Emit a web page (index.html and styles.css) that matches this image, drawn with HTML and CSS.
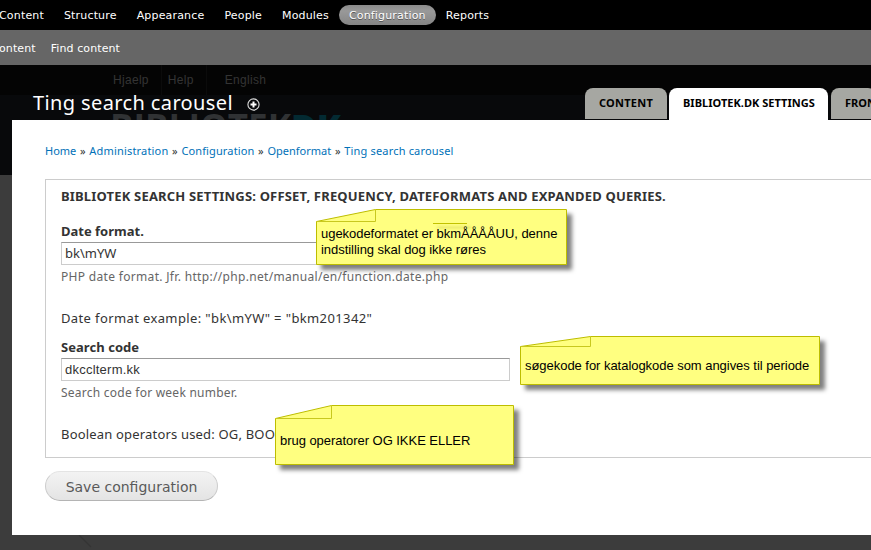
FILE: index.html
```
<!DOCTYPE html>
<html lang="da">
<head>
<meta charset="utf-8">
<title>Ting search carousel</title>
<link rel="stylesheet" href="styles.css">
</head>
<body>
<div class="screen">
  <nav class="toolbar">
    <a>Content</a><a>Structure</a><a>Appearance</a><a>People</a><a>Modules</a><a class="current">Configuration</a><a>Reports</a>
  </nav>
  <nav class="shortcuts"><a>ontent</a><a>Find content</a></nav>

  <div class="stage">
    <div class="backdrop">
      <div class="site-links"><a>Hjaelp</a><a>Help</a><a>English</a></div>
      <div class="site-brand"><span class="brand-text">BIBLIOTEK<b>DK</b></span></div>
      <svg class="streak" width="20" height="15" viewBox="0 0 20 15"><path d="M4 0L16 12" stroke="#343434" stroke-width="1.4"/></svg>
    </div>

    <div class="overlay">
      <header class="overlay-head">
        <h1>Ting search carousel</h1>
        <svg class="add" width="13" height="13" viewBox="0 0 13 13"><circle cx="6.5" cy="6.5" r="5.6" fill="#08090b" stroke="#ddd" stroke-width="1.1"/><path d="M6.5 3.5v6M3.5 6.5h6" stroke="#fff" stroke-width="2"/></svg>
        <ul class="tabs">
          <li class="tab-content">Content</li>
          <li class="tab-settings active">Bibliotek.dk settings</li>
          <li class="tab-front">Fron</li>
        </ul>
      </header>
      <main class="panel">
        <div class="breadcrumb"><a>Home</a><i>»</i><a class="w2">Administration</a><i>»</i><a class="w3">Configuration</a><i>»</i><a>Openformat</a><i>»</i><a class="w2">Ting search carousel</a></div>
        <form>
          <section class="fieldset">
            <h2>BIBLIOTEK SEARCH SETTINGS: OFFSET, FREQUENCY, DATEFORMATS AND EXPANDED QUERIES.</h2>
            <label>Date format.</label>
            <div class="input">bk\mYW</div>
            <p class="description">PHP date format. Jfr. http://php.net/manual/en/function.date.php</p>
            <p class="example">Date format example: "bk\mYW" = "bkm201342"</p>
            <label class="code-label">Search code</label>
            <div class="input code">dkcclterm.kk</div>
            <p class="description short">Search code for week number.</p>
            <p class="operators">Boolean operators used: OG, BOOL</p>
          </section>
          <button type="button">Save configuration</button>
        </form>
      </main>
    </div>
  </div>

  <aside class="note note-date">
    <svg width="251" height="56" viewBox="0 0 251 56"><path class="sheet" d="M.5 12.5L59.5.5H250.5V55.5H.5Z"/><path class="fold" d="M.5 12.5H59.5V.5"/></svg>
    <p>ugekodeformatet er <span class="mark">bkm</span>ÅÅÅÅUU, denne<br>indstilling skal dog ikke røres</p>
  </aside>
  <aside class="note note-code">
    <svg width="300" height="49" viewBox="0 0 300 49"><path class="sheet" d="M.5 10.5L70.5.5H299.5V48.5H.5Z"/><path class="fold" d="M.5 10.5H70.5V.5"/></svg>
    <p>søgekode for katalogkode som angives til periode</p>
  </aside>
  <aside class="note note-operators">
    <svg width="239" height="60" viewBox="0 0 239 60"><path class="sheet" d="M.5 13.5L56.5.5H238.5V59.5H.5Z"/><path class="fold" d="M.5 13.5H56.5V.5"/></svg>
    <p>brug operatorer OG IKKE ELLER</p>
  </aside>
</div>
</body>
</html>
```
FILE: styles.css
```
* { box-sizing: border-box; }
body { margin: 0; overflow: hidden; }
h1, h2, p, ul { margin: 0; padding: 0; font-weight: normal; }
.screen {
  position: relative;
  width: 871px;
  height: 550px;
  overflow: hidden;
  background: #3c3c3c;
  font-family: "Noto Sans", sans-serif;
  color: #333;
  white-space: nowrap;
}
.toolbar, .shortcuts {
  display: flex;
  align-items: center;
  font: 11px/20px "DejaVu Sans", sans-serif;
  letter-spacing: 0.17px;
  color: #fff;
}
.toolbar { height: 30px; background: #000; }
.toolbar a { margin-right: 20px; padding-top: 2px; }
.toolbar a:first-child { margin-left: -1px; }
.toolbar .current {
  margin: 0 10px 0 -10px;
  padding: 1px 10px 0;
  height: 20px;
  border-radius: 10px;
  background: linear-gradient(#8a8a8a, #999 30%, #858585);
  text-shadow: 0 1px 0 #555;
}
.shortcuts { height: 35px; padding-top: 2px; gap: 15px; background: #666; letter-spacing: 0.1px; }
.shortcuts a:first-child { margin-left: -1px; }

.stage { position: relative; height: 485px; }
.backdrop { position: absolute; inset: 0; }
.site-links {
  display: flex;
  height: 30px;
  padding-left: 113px;
  background: #040404;
  font: 12px/30px "Liberation Sans", sans-serif;
  letter-spacing: 0.3px;
  color: #343434;
}
.site-links a { border-right: 1px solid #0b0b0b; padding-right: 12px; margin-right: 6px; }
.site-links a:nth-child(3) { margin-left: 12px; border: 0; }
.site-brand { height: 80px; padding: 12px 0 0 110px; background: #08090b; overflow: hidden; }
.brand-text { font: bold 35px/40px "Open Sans", sans-serif; color: #303234; }
.brand-text b { color: #032a32; }
.streak { position: absolute; left: 75px; top: 470px; }

.overlay { position: absolute; inset: 0; }
.overlay-head { display: flex; height: 55px; padding-left: 33px; }
h1 { margin-top: 24px; font-size: 20px; line-height: 28px; letter-spacing: 0.38px; color: #fff; }
.add { margin: 33px 0 0 14px; }
.tabs { position: absolute; left: 585px; top: 23px; display: flex; gap: 2px; list-style: none; }
.tabs li {
  height: 31px;
  padding: 0 14px;
  border-radius: 8px 8px 0 0;
  background: #a6a7a2;
  font-size: 11px;
  line-height: 30px;
  font-weight: bold;
  text-transform: uppercase;
  color: #000;
}
.tabs .tab-content { width: 82px; letter-spacing: 0.24px; }
.tabs .active { width: 159px; height: 32px; background: #fff; letter-spacing: 0.03px; }
.tabs .tab-front { margin-left: 1px; padding-right: 0; }

.panel { margin-left: 12px; width: 900px; height: 415px; padding: 22px 0 0 33px; background: #fff; }
.breadcrumb { display: flex; height: 18px; font-size: 11px; line-height: 18px; color: #0071b8; }
.breadcrumb i { width: 13px; text-align: center; font-style: normal; color: #333; }
.breadcrumb .w2 { letter-spacing: 0.18px; }
.breadcrumb .w3 { letter-spacing: 0.13px; }
.fieldset {
  display: flow-root;
  height: 279px;
  margin-top: 19px;
  padding: 6px 0 0 15px;
  border: 1px solid #ccc;
}
h2, label { display: block; font-size: 13px; line-height: 20px; font-weight: bold; }
h2 { letter-spacing: 0.175px; margin-bottom: 15px; }
.input {
  width: 449px;
  height: 23px;
  padding-left: 3px;
  border: 1px solid #ccc;
  border-top-color: #999;
  font-size: 13px;
  line-height: 21px;
}
label + .input { margin-top: 1px; }
.input.code { font-family: "Liberation Sans", sans-serif; letter-spacing: 0.23px; }
.description { margin-top: 2px; font-size: 12px; line-height: 20px; letter-spacing: 0.32px; color: #666; }
.description.short { letter-spacing: 0.24px; }
.example, .operators { margin-top: 21px; font-size: 13px; line-height: 20px; }
.example { letter-spacing: 0.38px; }
.operators { letter-spacing: 0.18px; }
.code-label { margin-top: 9px; letter-spacing: 0.05px; }
button {
  display: block;
  width: 173px;
  height: 30px;
  margin-top: 13px;
  padding: 1px 0 0;
  border: 1px solid #ccc;
  border-top-color: #e4e4e4;
  border-bottom-color: #b4b4b4;
  border-radius: 15px;
  background: linear-gradient(#f3f3f3, #e4e4e4);
  font: 14px "DejaVu Sans", sans-serif;
  color: #5a5a5a;
}

.note { position: absolute; font: 13px/16px "Liberation Sans", sans-serif; letter-spacing: -0.04px; color: #000; }
.note svg { display: block; overflow: visible; filter: drop-shadow(5px 5px 2px rgba(0, 0, 0, 0.5)); }
.sheet { fill: #ffff80; stroke: #bdbd00; }
.fold { fill: none; stroke: #c8c81e; }
.note p { position: absolute; left: 5px; }
.note-date { left: 316px; top: 209px; }
.note-date p { top: 17px; }
.note-code { left: 520px; top: 336px; }
.note-code p { top: 22px; }
.note-operators { left: 275px; top: 405px; }
.note-operators p { top: 28px; }
.mark { position: relative; }
.mark::before { content: ""; position: absolute; left: -4px; top: -3px; width: 34px; height: 1px; background: #c2c200; box-shadow: 4px 4px 3px rgba(100, 100, 0, 0.35); }
```
